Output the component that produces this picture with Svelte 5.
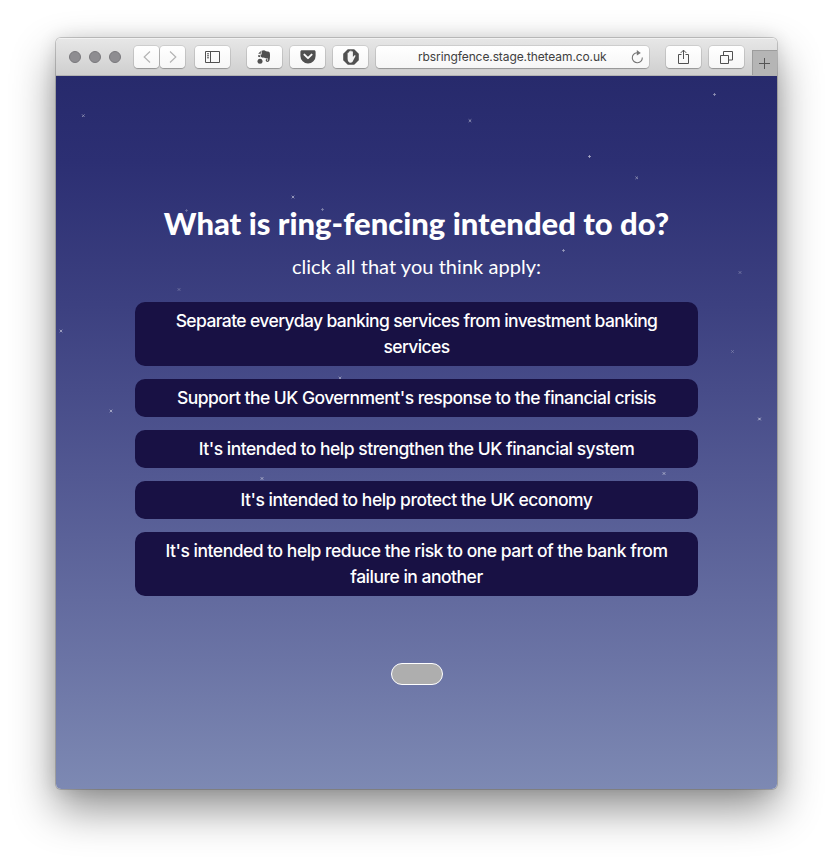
<script>
  const answers = [
    { lines: ['Separate everyday banking services from investment banking', 'services'] },
    { lines: ["Support the UK Government's response to the financial crisis"] },
    { lines: ["It's intended to help strengthen the UK financial system"] },
    { lines: ["It's intended to help protect the UK economy"] },
    { lines: ["It's intended to help reduce the risk to one part of the bank from", 'failure in another'] }
  ];
  // x, y inside the sky, kind (x = diagonal, p = plus), opacity
  const stars = [
    [27.3, 39.7, 'x', 0.5], [414, 44.7, 'x', 0.6], [658.5, 18.5, 'p', 0.5], [533.5, 80.5, 'p', 0.6],
    [580.7, 101.8, 'x', 0.5], [237, 121, 'x', 0.6], [266.5, 133.5, 'p', 0.4], [130.5, 134.5, 'p', 0.3],
    [507.5, 174.5, 'p', 0.5], [684, 196.5, 'x', 0.35], [123, 213.5, 'x', 0.3], [5, 255, 'x', 0.6],
    [676.5, 275.5, 'x', 0.3], [55, 335, 'x', 0.6], [703.5, 343, 'x', 0.75], [284, 302, 'x', 0.5],
    [608, 397.5, 'x', 0.6], [206, 402.5, 'x', 0.6]
  ];
</script>

<div class="desktop">
  <div class="window">
    <header>
      <div class="lights"><i></i><i></i><i></i></div>
      <div class="nav">
        <button aria-label="Back"><svg width="10" height="14" viewBox="0 0 10 14"><path d="M8 1.5 2.2 7 8 12.5" /></svg></button>
        <button aria-label="Forward"><svg width="10" height="14" viewBox="0 0 10 14"><path d="M2 1.5 7.8 7 2 12.5" /></svg></button>
      </div>
      <button class="tool side" aria-label="Sidebar">
        <svg width="15" height="12" viewBox="0 0 15 12"><path d="M.5.5h14v11H.5zM5.5.5v11M2 2.8h2M2 4.8h2M2 6.8h2" fill="none" stroke="#505050" /></svg>
      </button>
      <button class="tool note" aria-label="Notes">
        <svg width="14" height="14" viewBox="0 0 14 14" fill="#505050">
          <circle cx="3" cy="11.2" r="2.5" />
          <path d="M4.500.8 7 .2c1 0 1.500.8 2 1.100l3 .4c.8.3 1 1.700 1 3.800 0 3-.3 5.200-1.300 6.100-1 .8-3 .4-3-1 0-1.200 1-1.800 2-1.300l-.7.8c-.3.7.6 1 .9.3.3-.6.3-1.300 0-1.800-1.100-.4-2 .1-2.700-.5C7.200 7.600 5 8 4.200 7 3.700 6.400 3.400 5.400 3.500 4.500h1.200z" />
          <path d="M3.800 1v2.700H1.200zM1 5.200h2l.3 2-2.100-.5z" />
        </svg>
      </button>
      <button class="tool pocket" aria-label="Pocket">
        <svg width="16" height="14" viewBox="0 0 16 14"><path d="M2 .3h12c1 0 1.6.7 1.6 1.6v4A7.6 7.6 0 0 1 .4 6V1.9C.4 1 1 .3 2 .3z" fill="#505050" /><path d="m4.4 4.6 3.6 3.5 3.6-3.5" fill="none" stroke="#fafafa" stroke-width="2" stroke-linecap="round" stroke-linejoin="round" /></svg>
      </button>
      <button class="tool hand" aria-label="Blocker">
        <svg width="16" height="16" viewBox="0 0 16 16"><path d="M4.8.2h6.4l4.6 4.6v6.4l-4.6 4.6H4.8L.2 11.2V4.8z" fill="#505050" /><path d="M4.600 9V4.200c0-.9 1.200-.9 1.200 0V3c0-1 1.400-1 1.400 0v-.7c0-1 1.400-1 1.400 0V3c0-.9 1.300-.9 1.300 0v5l1.300-1.500c.7-.7 1.600-.1 1.200.7l-2.200 4.400c-.6 1.600-1.300 2.200-2.700 2.200C5.600 13.800 4.600 12 4.600 9.500z" fill="#f4f4f4" /></svg>
      </button>
      <div class="address">
        <span>rbsringfence.stage.theteam.co.uk</span>
        <svg class="reload" width="13" height="14" viewBox="0 0 13 14"><path d="M7.200 2.800H6A5 5 0 1 0 11.300 7.500" fill="none" stroke="#777" stroke-width="1.100" /><path d="M5.800 0 9.800 2.900 5.800 5.600z" fill="#777" /></svg>
      </div>
      <button class="tool share" aria-label="Share">
        <svg width="13" height="16" viewBox="0 0 13 16"><path d="M4.500 5.500h-3v9h10v-9h-3M6.500 10V1.200M3.750 3.900 6.500 1.150 9.250 3.900" fill="none" stroke="#505050" /></svg>
      </button>
      <button class="tool tabs" aria-label="Tabs">
        <svg width="13" height="13" viewBox="0 0 13 13"><path d="M.5 4.500h8v8h-8zM3.500 4.500v-4h9v8.500h-4" fill="none" stroke="#505050" /></svg>
      </button>
      <button class="plus" aria-label="New tab"><svg width="11" height="11" viewBox="0 0 11 11"><path d="M5.500 0v11M0 5.500h11" stroke="#555" /></svg></button>
    </header>
    <main>
      <svg class="sky" width="721" height="714" viewBox="0 0 721 714">
        {#each stars as [x, y, kind, o]}
          <path
            transform="translate({x} {y})"
            opacity={o}
            d={kind === 'x' ? 'M-1.300-1.300l2.600 2.600M1.300-1.300l-2.600 2.600' : 'M-1.500 0h3M0-1.500v3'}
          />
        {/each}
      </svg>
      <h1>What is ring-fencing intended to do?</h1>
      <p>click all that you think apply:</p>
      <div class="answers">
        {#each answers as answer, i}
          <button class="answer" class:tightest={i === 0} class:tight={i === 1}>
            {#each answer.lines as line}<span>{line}</span>{/each}
          </button>
        {/each}
      </div>
      <button class="submit" aria-label="Submit"></button>
    </main>
  </div>
</div>

<style>
  :global(body) { background: #fff; }
  .desktop { box-sizing: border-box; width: 833px; height: 863px; padding: 38px 56px 0; overflow: hidden; }
  .window {
    width: 721px; height: 751px; border-radius: 5px; display: flex; flex-direction: column; overflow: hidden;
    box-shadow: 0 0 0 1px rgba(0, 0, 0, .18), 0 20px 44px rgba(0, 0, 0, .44), 0 0 18px rgba(0, 0, 0, .12);
  }
  button { border: 0; padding: 0; margin: 0; font: inherit; display: flex; align-items: center; justify-content: center; }
  header {
    box-sizing: border-box; height: 38px; flex: none; display: flex; align-items: flex-start; padding: 8px 0 0 13px;
    background: linear-gradient(#e7e7e7, #cfcfcf); border-bottom: 1px solid #b2b2b2; box-shadow: inset 0 1px #f2f2f2;
  }
  .lights { display: flex; gap: 8px; padding-top: 5px; width: 65px; }
  .lights i { box-sizing: border-box; width: 12px; height: 12px; border-radius: 50%; background: #8e8d91; border: 1px solid #79787c; }
  .nav { display: flex; gap: 1px; }
  .nav button { width: 25px; border-radius: 4px; }
  .nav path { fill: none; stroke: #b4b4b4; stroke-width: 1.2; }
  .nav button, .tool, .address { height: 22px; background: linear-gradient(#fff, #f6f6f6); box-shadow: 0 0 0 1px rgba(0, 0, 0, .09), 0 1px 1px rgba(0, 0, 0, .22); }
  .tool { width: 35px; border-radius: 4px; flex: none; }
  .side { margin-left: 10px; }
  .note { margin-left: 17px; padding-right: 2px; }
  .pocket, .hand { margin-left: 8px; }
  .address { margin-left: 8px; width: 273px; border-radius: 4px; display: flex; align-items: center; font: 12px/22px Inter, sans-serif; color: #404040; }
  .address span { width: 213px; padding-left: 42px; letter-spacing: -.1px; white-space: nowrap; }
  .share { margin-left: 17px; }
  .tabs { margin-left: 8px; }
  .plus { box-sizing: border-box; width: 25px; height: 25px; margin: 4px 0 0 8px; padding-right: 2px; background: #b5b5b5; border: solid #9c9c9c; border-width: 1px 0 0 1px; flex: none; }
  main {
    position: relative; flex: 1; display: flex; flex-direction: column; align-items: center; color: #fff;
    background: linear-gradient(#272a6c 0%, #2c2f73 12%, #3c4080 32%, #525892 56%, #6b74a5 82%, #7d89b3 100%);
  }
  .sky { position: absolute; inset: 0; }
  .sky path { stroke: #fff; stroke-width: .8; }
  h1 { position: relative; margin: 127px 0 0; font: 900 31px/40px Lato, sans-serif; white-space: nowrap; }
  p { position: relative; margin: 8px 0 0; font: 400 20px/30px Lato, sans-serif; letter-spacing: .04px; white-space: nowrap; }
  .answers { position: relative; width: 563px; margin-top: 21px; display: flex; flex-direction: column; gap: 13px; }
  .answer {
    flex-direction: column; padding: 6px 0; border-radius: 10px; background: #181144; color: #fff;
    font: 500 17.5px/26px Inter, sans-serif; letter-spacing: -.49px; white-space: nowrap;
  }
  .tight { letter-spacing: -.53px; }
  .tightest { letter-spacing: -.61px; }
  .submit { box-sizing: border-box; width: 52px; height: 22px; margin-top: 67px; background: #aeaeae; border: 1px solid #fff; border-radius: 11px; }
</style>
